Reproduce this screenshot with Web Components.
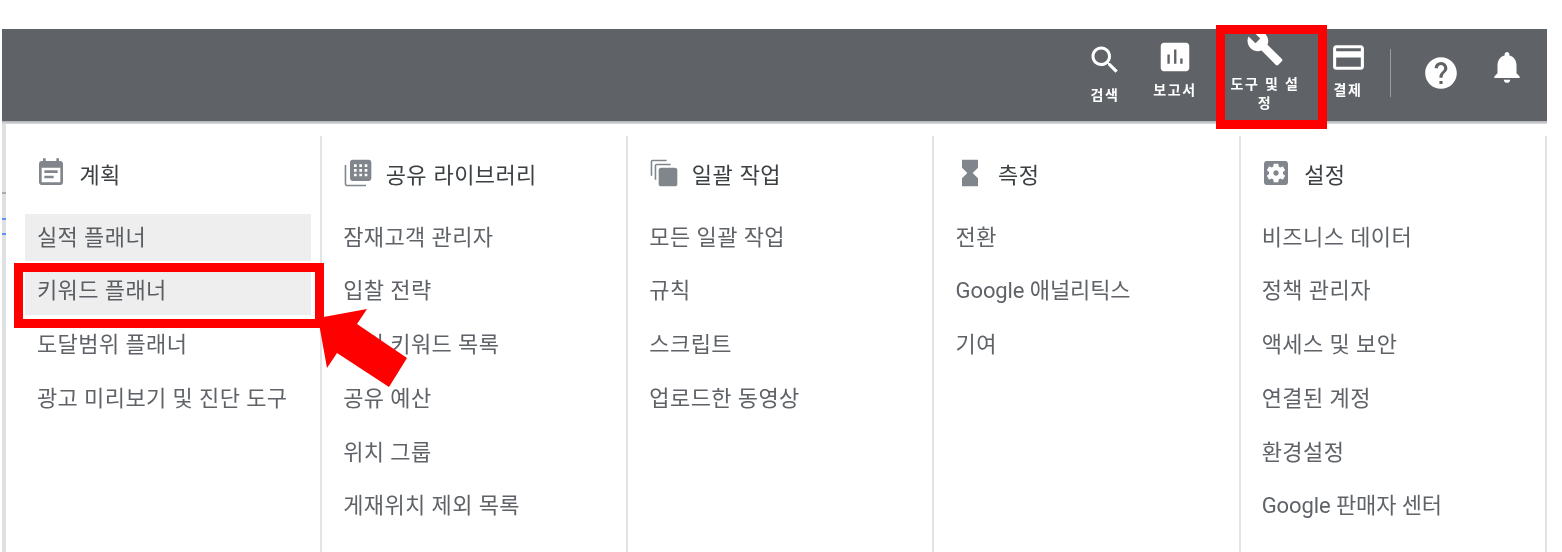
<!DOCTYPE html>
<html lang="ko">
<head>
<meta charset="utf-8">
<title>도구 및 설정</title>
<style>
	html, body { margin: 0; background: #fff; }
	body { font-family: "Noto Sans CJK KR", Roboto, sans-serif; }
</style>
</head>
<body>
<ads-page>
	<top-bar>
		<bar-item icon="search" style="--w:50px;--ml:0px;--top:13px;--icon:36px;--gap:7px">검색</bar-item>
		<bar-item icon="report" style="--w:60px;--ml:15px;--top:9px;--icon:38px;--gap:4px">보고서</bar-item>
		<bar-item icon="wrench" style="--w:76px;--ml:22px;--top:-3px;--icon:38px;--gap:6.5px">도구 및 설정</bar-item>
		<bar-item icon="card" style="--w:50px;--ml:20px;--top:10px;--icon:37px;--gap:4px">결제</bar-item>
		<bar-divider></bar-divider>
		<bar-item icon="help" style="--w:40px;--ml:30px;--top:25px;--icon:38px;--gap:0px"></bar-item>
		<bar-item icon="bell" style="--w:40px;--ml:26px;--top:19px;--icon:38px;--gap:0px"></bar-item>
	</top-bar>
	<menu-panel>
		<menu-column icon="calendar" heading="계획">
			<menu-link active>실적 플래너</menu-link>
			<menu-link active>키워드 플래너</menu-link>
			<menu-link>도달범위 플래너</menu-link>
			<menu-link>광고 미리보기 및 진단 도구</menu-link>
		</menu-column>
		<menu-column icon="library" heading="공유 라이브러리">
			<menu-link>잠재고객 관리자</menu-link>
			<menu-link>입찰 전략</menu-link>
			<menu-link>제외 키워드 목록</menu-link>
			<menu-link>공유 예산</menu-link>
			<menu-link>위치 그룹</menu-link>
			<menu-link>게재위치 제외 목록</menu-link>
		</menu-column>
		<menu-column icon="bulk" heading="일괄 작업">
			<menu-link>모든 일괄 작업</menu-link>
			<menu-link>규칙</menu-link>
			<menu-link>스크립트</menu-link>
			<menu-link>업로드한 동영상</menu-link>
		</menu-column>
		<menu-column icon="hourglass" heading="측정">
			<menu-link>전환</menu-link>
			<menu-link style="letter-spacing:-.1px">Google 애널리틱스</menu-link>
			<menu-link>기여</menu-link>
		</menu-column>
		<menu-column icon="settings" heading="설정">
			<menu-link>비즈니스 데이터</menu-link>
			<menu-link>정책 관리자</menu-link>
			<menu-link>액세스 및 보안</menu-link>
			<menu-link>연결된 계정</menu-link>
			<menu-link>환경설정</menu-link>
			<menu-link style="letter-spacing:-.1px">Google 판매자 센터</menu-link>
		</menu-column>
	</menu-panel>
	<red-box style="left:1216px;top:25px;width:111px;height:104px"></red-box>
	<red-box style="left:14px;top:263px;width:310px;height:65px"></red-box>
	<red-arrow></red-arrow>
</ads-page>

<script>
const ICONS = {
	search: '<path d="M15.5 14h-.79l-.28-.27C15.41 12.59 16 11.11 16 9.5 16 5.91 13.09 3 9.5 3S3 5.91 3 9.5 5.91 16 9.5 16c1.61 0 3.09-.59 4.23-1.57l.27.28v.79l5 4.99L20.49 19l-4.99-5zm-6 0C7.01 14 5 11.99 5 9.5S7.01 5 9.5 5 14 7.01 14 9.5 11.99 14 9.5 14z"/>',
	report: '<path fill-rule="evenodd" d="M19 3H5c-1.1 0-2 .9-2 2v14c0 1.1.9 2 2 2h14c1.1 0 2-.9 2-2V5c0-1.1-.9-2-2-2zM7.2 10.4h1.5v5.9H7.2zM11.4 7.2h1.5v9.1h-1.5zM15.3 13h1.5v3.3h-1.5z"/>',
	wrench: '<path d="M22.7 19l-9.1-9.1c.9-2.3.4-5-1.5-6.9-2-2-5-2.4-7.4-1.3L9 6 6 9 1.6 4.7C.4 7.1.9 10.1 2.9 12.1c1.9 1.9 4.6 2.4 6.9 1.5l9.1 9.1c.4.4 1 .4 1.4 0l2.3-2.3c.5-.4.5-1.1.1-1.4z"/>',
	card: '<path d="M20 4H4c-1.11 0-1.99.89-1.99 2L2 18c0 1.11.89 2 2 2h16c1.11 0 2-.89 2-2V6c0-1.11-.89-2-2-2zm0 14H4v-6h16v6zm0-10H4V6h16v2z"/>',
	help: '<path d="M12 2C6.48 2 2 6.48 2 12s4.48 10 10 10 10-4.48 10-10S17.52 2 12 2zm1 17h-2v-2h2v2zm2.07-7.75l-.9.92C13.45 12.9 13 13.5 13 15h-2v-.5c0-1.1.45-2.1 1.17-2.83l1.24-1.26c.37-.36.59-.86.59-1.41 0-1.1-.9-2-2-2s-2 .9-2 2H8c0-2.21 1.79-4 4-4s4 1.79 4 4c0 .88-.36 1.68-.93 2.25z"/>',
	bell: '<path d="M12 22c1.1 0 2-.9 2-2h-4c0 1.1.89 2 2 2zm6-6v-5c0-3.07-1.64-5.64-4.5-6.32V4c0-.83-.67-1.5-1.5-1.5s-1.5.67-1.5 1.5v.68C7.63 5.36 6 7.92 6 11v5l-2 2v1h16v-1l-2-2z"/>',
	calendar: '<path d="M17 10H7v2h10v-2zm2-7h-1V1h-2v2H8V1H6v2H5c-1.11 0-1.99.9-1.99 2L3 19c0 1.1.89 2 2 2h14c1.1 0 2-.9 2-2V5c0-1.1-.9-2-2-2zm0 16H5V8h14v11zm-5-5H7v2h7v-2z"/>',
	library: '<path d="M3.2 6H2v14c0 1.1.9 2 2 2h14v-1.2H4c-.45 0-.8-.35-.8-.8V6z"/><path fill-rule="evenodd" d="M20 2H8c-1.1 0-2 .9-2 2v12c0 1.1.9 2 2 2h12c1.1 0 2-.9 2-2V4c0-1.1-.9-2-2-2zM9 5.5h2v2H9zM13 5.5h2v2h-2zM17 5.5h2v2h-2zM9 9h2v2H9zM13 9h2v2h-2zM17 9h2v2h-2zM9 12.5h2v2H9zM13 12.5h2v2h-2zM17 12.5h2v2h-2z"/>',
	bulk: '<path d="M2 3.5C2 2.7 2.7 2 3.5 2H14v1.2H3.2V14H2z"/><path d="M5 6.5C5 5.7 5.7 5 6.5 5H17v1.2H6.2V17H5z"/><rect x="8" y="8" width="14" height="14" rx="2"/>',
	hourglass: '<path d="M6 2v6h.01L6 8.01 10 12l-4 4 .01.01H6V22h12v-5.99h-.01L18 16l-4-4 4-3.99-.01-.01H18V2H6z"/>',
	settings: '<path d="M12 10c-1.1 0-2 .9-2 2s.9 2 2 2 2-.9 2-2-.9-2-2-2zm7-7H5c-1.11 0-2 .9-2 2v14c0 1.1.89 2 2 2h14c1.11 0 2-.9 2-2V5c0-1.1-.89-2-2-2zm-1.75 9c0 .23-.02.46-.05.68l1.48 1.16c.13.11.17.3.08.45l-1.4 2.42c-.09.15-.27.21-.43.15l-1.74-.7c-.36.28-.76.51-1.18.69l-.26 1.85c-.03.17-.18.3-.35.3h-2.8c-.17 0-.32-.13-.35-.29l-.26-1.85c-.43-.18-.82-.41-1.18-.69l-1.74.7c-.16.06-.34 0-.43-.15l-1.4-2.42c-.09-.15-.05-.34.08-.45l1.48-1.16c-.03-.23-.05-.46-.05-.69 0-.23.02-.46.05-.68l-1.48-1.16c-.13-.11-.17-.3-.08-.45l1.4-2.42c.09-.15.27-.21.43-.15l1.74.7c.36-.28.76-.51 1.18-.69l.26-1.85c.03-.17.18-.3.35-.3h2.8c.17 0 .32.13.35.29l.26 1.85c.43.18.82.41 1.18.69l1.74-.7c.16-.06.34 0 .43.15l1.4 2.42c.09.15.05.34-.08.45l-1.48 1.16c.03.23.05.46.05.69z"/>'
};

function icon(name) {
	return `<svg viewBox="0 0 24 24" fill="currentColor">${ICONS[name]}</svg>`;
}

class AdsPage extends HTMLElement {
	constructor() {
		super();
		this.attachShadow({mode: 'open'}).innerHTML = `
			<style>
				:host { display: block; position: relative; width: 1562px; height: 552px; overflow: hidden; padding: 29px 15px 0 2px; box-sizing: border-box; }
			</style>
			<slot></slot>
		`;
	}
}

class TopBar extends HTMLElement {
	constructor() {
		super();
		this.attachShadow({mode: 'open'}).innerHTML = `
			<style>
				:host { display: flex; justify-content: flex-end; height: 92px; padding-right: 20px; box-sizing: border-box; background: #5f6368; filter: blur(.5px); }
			</style>
			<slot></slot>
		`;
	}
}

class BarItem extends HTMLElement {
	constructor() {
		super();
		this.attachShadow({mode: 'open'}).innerHTML = `
			<style>
				:host { display: flex; flex-direction: column; align-items: center; flex: none; box-sizing: border-box; width: var(--w); margin-left: var(--ml); padding-top: var(--top); color: #fff; font-size: 14px; font-weight: 700; line-height: 19px; letter-spacing: 1.6px; text-align: center; }
				svg { display: block; flex: none; width: var(--icon); height: var(--icon); margin-bottom: var(--gap); }
			</style>
			${icon(this.getAttribute('icon'))}
			<div><slot></slot></div>
		`;
	}
}

class BarDivider extends HTMLElement {
	constructor() {
		super();
		this.attachShadow({mode: 'open'}).innerHTML = `
			<style>
				:host { display: block; flex: none; width: 1px; height: 48px; margin: 20px 0 0 17px; background: #9a9da1; }
			</style>
		`;
	}
}

class MenuPanel extends HTMLElement {
	constructor() {
		super();
		this.attachShadow({mode: 'open'}).innerHTML = `
			<style>
				:host { display: block; height: 431px; background: linear-gradient(#aeb0b3, #dcdddf); background-size: 100% 3px; background-repeat: no-repeat; padding-top: 3px; box-sizing: border-box; filter: blur(.5px); }
				.wrap { display: flex; height: 100%; }
				.strip { flex: none; width: 4px; background:
					linear-gradient(#5b95f0, #5b95f0) 0 94px / 100% 2px no-repeat,
					linear-gradient(#5b95f0, #5b95f0) 0 109px / 100% 2px no-repeat,
					linear-gradient(#a9abae, #a9abae) 0 68px / 100% 2px no-repeat,
					#dfe0e2; }
				.sheet { flex: 1; display: grid; grid-template-columns: repeat(5, 306.2px); align-items: stretch; padding: 12px 0 0 9.8px; background: #fff; border-radius: 3px 0 0 0; }
			</style>
			<div class="wrap">
				<div class="strip"></div>
				<div class="sheet"><slot></slot></div>
			</div>
		`;
	}
}

class MenuColumn extends HTMLElement {
	constructor() {
		super();
		this.attachShadow({mode: 'open'}).innerHTML = `
			<style>
				:host { display: block; box-sizing: border-box; padding: 0 9px 0 9.2px; border-right: 2px solid #e2e3e5; }
				.head { display: flex; align-items: center; gap: 12px; height: 78px; padding: 0 0 4px 10.5px; box-sizing: border-box; color: #3c4043; font-size: 22px; letter-spacing: .4px; }
				svg { display: block; flex: none; width: 32px; height: 32px; color: #80868b; }
				.links { display: flex; flex-direction: column; gap: 6.8px; }
			</style>
			<div class="head">${icon(this.getAttribute('icon'))}<span>${this.getAttribute('heading')}</span></div>
			<div class="links"><slot></slot></div>
		`;
	}
}

class MenuLink extends HTMLElement {
	constructor() {
		super();
		this.attachShadow({mode: 'open'}).innerHTML = `
			<style>
				:host { display: flex; align-items: center; height: 47px; padding: 0 0 6px 12px; box-sizing: border-box; color: #5f6368; font-family: Roboto, "Noto Sans CJK KR", sans-serif; font-size: 22px; letter-spacing: .4px; white-space: nowrap; }
				:host([active]) { background: #eeeeee; color: #5a5e62; }
			</style>
			<slot></slot>
		`;
	}
}

class RedBox extends HTMLElement {
	constructor() {
		super();
		this.attachShadow({mode: 'open'}).innerHTML = `
			<style>
				:host { display: block; position: absolute; box-sizing: border-box; border: 9px solid #ff0000; }
			</style>
		`;
	}
}

class RedArrow extends HTMLElement {
	constructor() {
		super();
		this.attachShadow({mode: 'open'}).innerHTML = `
			<style>
				:host { display: block; position: absolute; left: 300px; top: 300px; width: 130px; height: 100px; }
				svg { display: block; }
			</style>
			<svg width="130" height="100" viewBox="300 300 130 100">
				<polygon fill="#ff0000" points="318,318 367,309 357,324 407,358 389,387 337,353 327,368"/>
			</svg>
		`;
	}
}

customElements.define('ads-page', AdsPage);
customElements.define('top-bar', TopBar);
customElements.define('bar-item', BarItem);
customElements.define('bar-divider', BarDivider);
customElements.define('menu-panel', MenuPanel);
customElements.define('menu-column', MenuColumn);
customElements.define('menu-link', MenuLink);
customElements.define('red-box', RedBox);
customElements.define('red-arrow', RedArrow);
</script>
</body>
</html>
